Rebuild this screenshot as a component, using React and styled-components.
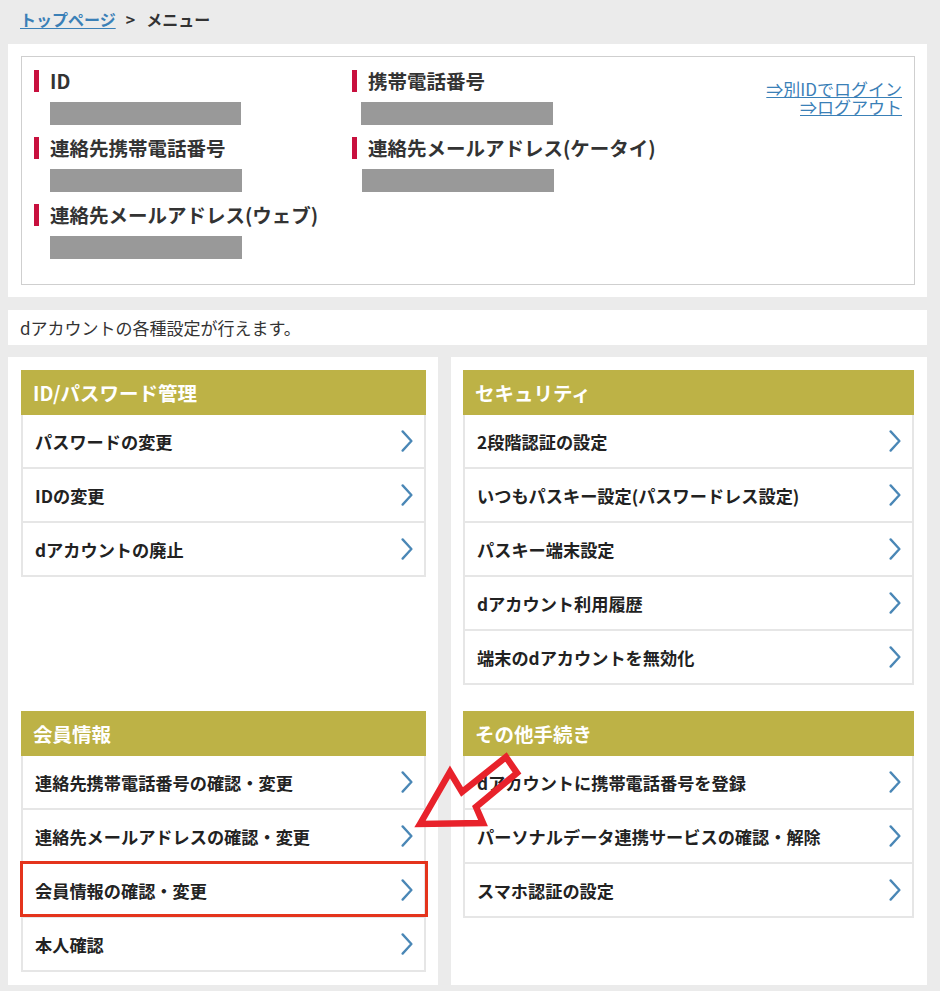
import React from "react";
import styled, { createGlobalStyle } from "styled-components";

const GlobalStyle = createGlobalStyle`
  html, body { margin: 0; padding: 0; background: #fff; }
  body {
    font-family: "Noto Sans CJK JP", "Noto Sans", sans-serif;
    color: #333;
  }
  *, *::before, *::after { box-sizing: border-box; }
`;

const Page = styled.div`
  position: relative;
  width: 940px;
  min-height: 991px;
  background: #ebebeb;
  padding: 0 13px 5px 8px;
`;

const Breadcrumb = styled.nav`
  padding: 9px 0 15px 12px;
  font-size: 16px;
  line-height: 20px;
  font-weight: 700;
  color: #333;
`;

const CrumbLink = styled.a`
  color: #3a80b7;
  text-decoration: underline;
  text-underline-offset: 2px;
`;

const CrumbSep = styled.span`
  margin: 0 11px 0 10px;
`;

const InfoPanel = styled.section`
  background: #fff;
  padding: 12px 12px 12px 13px;
`;

const InfoBox = styled.div`
  border: 1px solid #cfcfcf;
  padding: 13px 12px 25px 12px;
  display: flex;
  align-items: flex-start;
`;

const FieldGrid = styled.div`
  display: grid;
  grid-template-columns: 318px 330px;
  row-gap: 12px;
`;

const Field = styled.div`
  display: flex;
  flex-direction: column;
  gap: 10px;
`;

const FieldLabel = styled.div`
  display: flex;
  align-items: center;
  font-size: 19.5px;
  line-height: 22px;
  font-weight: 700;
  color: #333;
  white-space: nowrap;
  &::before {
    content: "";
    flex: none;
    width: 5px;
    height: 22px;
    background: #c8103e;
    margin-right: 11px;
  }
`;

const Redacted = styled.div`
  width: ${(p) => p.$width}px;
  height: 23px;
  background: #999;
  margin-left: ${(p) => p.$offset}px;
`;

const AccountLinks = styled.div`
  margin-left: auto;
  margin-top: 10px;
  display: flex;
  flex-direction: column;
  align-items: flex-end;
  font-size: 17px;
  line-height: 18px;
`;

const AccountLink = styled.a`
  display: block;
  height: 18px;
  overflow: visible;
  color: #3a80b7;
  text-decoration: underline;
  text-underline-offset: 1px;
  white-space: nowrap;
`;

const Description = styled.p`
  margin: 13px 0 0;
  background: #fff;
  height: 35px;
  padding: 0 12px;
  font-size: 17px;
  line-height: 35px;
  color: #333;
`;

const MenuGrid = styled.div`
  margin-top: 12px;
  display: grid;
  grid-template-columns: 430px 476px;
  column-gap: 13px;
`;

const MenuCell = styled.div`
  background: #fff;
  padding: 13px ${(p) => (p.$side === "left" ? 12 : 13)}px 13px
    ${(p) => (p.$side === "left" ? 13 : 12)}px;
`;

const GroupHeader = styled.h2`
  margin: 0;
  height: 45px;
  line-height: 45px;
  padding: 0 12px;
  background: #bdb246;
  color: #fff;
  font-size: 19.5px;
  font-weight: 700;
`;

const ItemList = styled.ul`
  list-style: none;
  margin: 0;
  padding: 0;
  border-left: 2px solid #e6e6e6;
  border-right: 2px solid #e6e6e6;
`;

const Item = styled.li`
  position: relative;
  height: 54px;
  display: flex;
  align-items: center;
  justify-content: space-between;
  padding: 0 11px 0 12px;
  border-bottom: 2px solid #e6e6e6;
  font-size: 17.2px;
  font-weight: 700;
  color: #222;
  white-space: nowrap;
  ${(p) =>
    p.$highlight &&
    `
    &::after {
      content: "";
      position: absolute;
      top: -3px;
      left: -3px;
      right: -4px;
      bottom: -1px;
      border: 3px solid #e4341c;
      pointer-events: none;
    }
  `}
`;

const ChevronSvg = styled.svg`
  flex: none;
  width: 12px;
  height: 22px;
`;

const ArrowOverlay = styled.svg`
  position: absolute;
  left: 400px;
  top: 740px;
  width: 135px;
  height: 100px;
  pointer-events: none;
  overflow: visible;
`;

const Chevron = () => (
  <ChevronSvg viewBox="0 0 12 22" aria-hidden="true">
    <polyline
      points="1.6,1.4 10.4,11 1.6,20.6"
      fill="none"
      stroke="#4a87b6"
      strokeWidth="2.3"
      strokeLinecap="round"
      strokeLinejoin="round"
    />
  </ChevronSvg>
);

const fields = [
  { label: "ID", offset: 16, width: 191 },
  { label: "携帯電話番号", offset: 9, width: 192 },
  { label: "連絡先携帯電話番号", offset: 16, width: 192 },
  { label: "連絡先メールアドレス(ケータイ)", offset: 10, width: 192 },
  { label: "連絡先メールアドレス(ウェブ)", offset: 16, width: 192 },
];

const groups = [
  {
    side: "left",
    title: "ID/パスワード管理",
    items: ["パスワードの変更", "IDの変更", "dアカウントの廃止"],
  },
  {
    side: "right",
    title: "セキュリティ",
    items: [
      "2段階認証の設定",
      "いつもパスキー設定(パスワードレス設定)",
      "パスキー端末設定",
      "dアカウント利用履歴",
      "端末のdアカウントを無効化",
    ],
  },
  {
    side: "left",
    title: "会員情報",
    items: [
      "連絡先携帯電話番号の確認・変更",
      "連絡先メールアドレスの確認・変更",
      "会員情報の確認・変更",
      "本人確認",
    ],
    highlight: "会員情報の確認・変更",
  },
  {
    side: "right",
    title: "その他手続き",
    items: [
      "dアカウントに携帯電話番号を登録",
      "パーソナルデータ連携サービスの確認・解除",
      "スマホ認証の設定",
    ],
  },
];

export default function App() {
  return (
    <>
      <GlobalStyle />
      <Page>
        <Breadcrumb>
          <CrumbLink href="#">トップページ</CrumbLink>
          <CrumbSep>&gt;</CrumbSep>
          <span>メニュー</span>
        </Breadcrumb>

        <InfoPanel>
          <InfoBox>
            <FieldGrid>
              {fields.map((f) => (
                <Field key={f.label}>
                  <FieldLabel>{f.label}</FieldLabel>
                  <Redacted $offset={f.offset} $width={f.width} />
                </Field>
              ))}
            </FieldGrid>
            <AccountLinks>
              <AccountLink href="#">⇒別IDでログイン</AccountLink>
              <AccountLink href="#">⇒ログアウト</AccountLink>
            </AccountLinks>
          </InfoBox>
        </InfoPanel>

        <Description>dアカウントの各種設定が行えます。</Description>

        <MenuGrid>
          {groups.map((g) => (
            <MenuCell key={g.title} $side={g.side}>
              <GroupHeader>{g.title}</GroupHeader>
              <ItemList>
                {g.items.map((it) => (
                  <Item key={it} $highlight={g.highlight === it}>
                    <span>{it}</span>
                    <Chevron />
                  </Item>
                ))}
              </ItemList>
            </MenuCell>
          ))}
        </MenuGrid>

        <ArrowOverlay viewBox="400 740 135 100" aria-hidden="true">
          <polygon
            points="420,824 450,772 462,792 506,757 517,773 476,807 483,823"
            fill="none"
            stroke="#e8222b"
            strokeWidth="6.5"
            strokeLinejoin="miter"
            strokeMiterlimit="10"
          />
        </ArrowOverlay>
      </Page>
    </>
  );
}
